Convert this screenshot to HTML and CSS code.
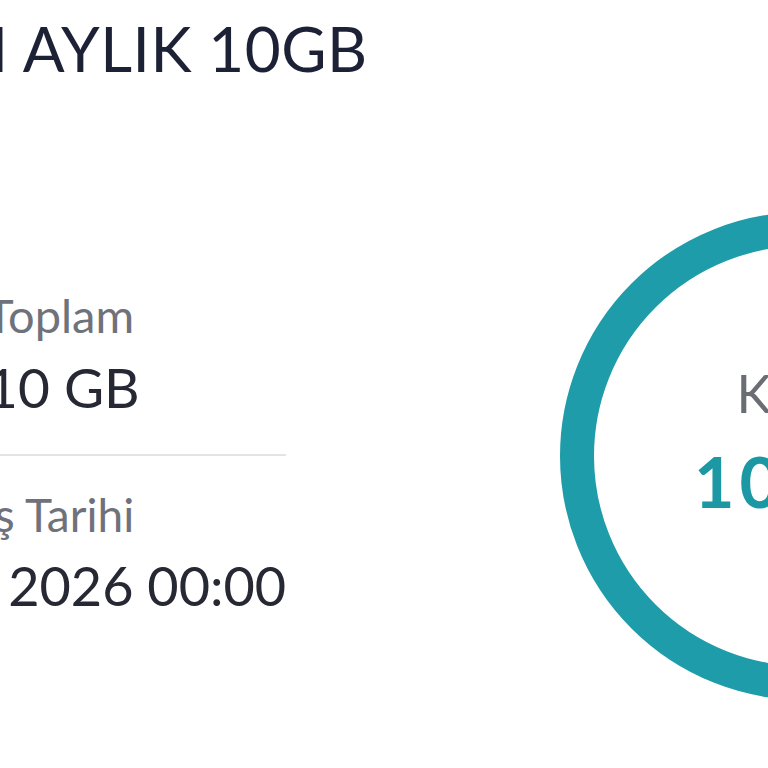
FILE: index.html
```html
<!DOCTYPE html>
<html lang="tr">
<head>
<meta charset="utf-8">
<title>Paket Detayı</title>
<link rel="stylesheet" href="styles.css">
</head>
<body>
<main class="page">
  <h1 class="title">KAMPANYALI AYLIK 10GB</h1>
  <section class="content">
    <div class="details">
      <div class="stat">
        <div class="label">Toplam</div>
        <div class="value">10 GB</div>
      </div>
      <hr class="divider">
      <div class="stat stat-date">
        <div class="label label-date">Bitiş Tarihi</div>
        <div class="value value-date">31 Ocak 2026 00:00</div>
      </div>
    </div>
    <div class="gauge">
      <div class="gauge-label">Kalan</div>
      <div class="gauge-value">10 GB</div>
    </div>
  </section>
</main>
</body>
</html>
```
FILE: styles.css
```css
html, body {
  margin: 0;
  padding: 0;
  background: #ffffff;
}
body {
  width: 768px;
  height: 768px;
  overflow: hidden;
  font-family: Lato, "Open Sans", sans-serif;
}
.page {
  padding-top: 11px;
}
.title {
  margin: 0 0 0 -386px;
  font-size: 62px;
  line-height: 74px;
  font-weight: 400;
  letter-spacing: 0.5px;
  color: #1d2136;
  white-space: nowrap;
}
.content {
  display: flex;
  align-items: flex-start;
}
.details {
  flex-shrink: 0;
  width: 300px;
  margin-left: -14px;
  padding-top: 202px;
}
.stat {
  white-space: nowrap;
}
.label {
  font-size: 47px;
  line-height: 56px;
  color: #6f727b;
}
.value {
  margin-top: 11px;
  font-size: 55px;
  line-height: 66px;
  color: #262834;
}
.divider {
  margin: 34px 0 0 0;
  border: 0;
  height: 2px;
  background: #e3e3e3;
}
.stat-date {
  margin-top: 31px;
}
.label-date {
  font-size: 46px;
  margin-left: -60px;
}
.value-date {
  margin-top: 10px;
  font-size: 54px;
  margin-left: -191px;
}
.gauge {
  flex-shrink: 0;
  box-sizing: border-box;
  width: 488px;
  height: 488px;
  margin: 127px 0 0 274px;
  padding-top: 116px;
  border: 34px solid #1e9ca9;
  border-radius: 50%;
  text-align: center;
  white-space: nowrap;
}
.gauge-label {
  font-size: 52px;
  line-height: 62px;
  letter-spacing: 1.5px;
  color: #6a6d73;
}
.gauge-value {
  margin-top: 17px;
  font-size: 70px;
  line-height: 80px;
  font-weight: 700;
  letter-spacing: 5px;
  color: #1c98a4;
}
```
